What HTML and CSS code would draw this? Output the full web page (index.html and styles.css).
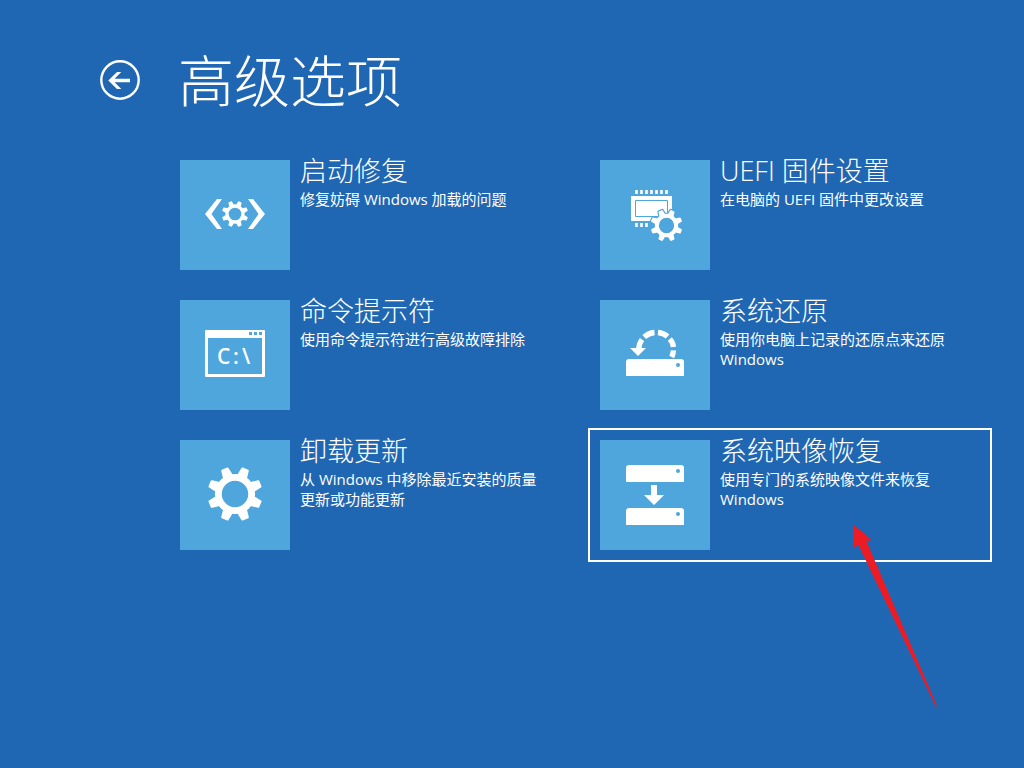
FILE: index.html
```html
<!DOCTYPE html>
<html lang="zh-CN">
<head>
    <meta charset="UTF-8">
    <meta name="viewport" content="width=device-width, initial-scale=1.0">
    <title>高级选项</title>
    <link rel="stylesheet" href="styles.css">
</head>
<body>
    <!-- shared shapes -->
    <svg class="defs" aria-hidden="true">
        <defs>
            <path id="tooth" d="M-5 -18 L-5 -21 L-4 -27 Q-4 -28 -3 -28 H3 Q4 -28 4 -27 L5 -21 V-18 Z"/>
            <g id="gear">
                <circle r="17" fill="none" stroke="#fff" stroke-width="7"/>
                <use href="#tooth" transform="rotate(22.5)"/>
                <use href="#tooth" transform="rotate(67.5)"/>
                <use href="#tooth" transform="rotate(112.5)"/>
                <use href="#tooth" transform="rotate(157.5)"/>
                <use href="#tooth" transform="rotate(202.5)"/>
                <use href="#tooth" transform="rotate(247.5)"/>
                <use href="#tooth" transform="rotate(292.5)"/>
                <use href="#tooth" transform="rotate(337.5)"/>
            </g>
            <g id="gear-edge">
                <circle r="20.5"/>
                <use href="#tooth" transform="rotate(22.5)"/>
                <use href="#tooth" transform="rotate(67.5)"/>
                <use href="#tooth" transform="rotate(112.5)"/>
                <use href="#tooth" transform="rotate(157.5)"/>
                <use href="#tooth" transform="rotate(202.5)"/>
                <use href="#tooth" transform="rotate(247.5)"/>
                <use href="#tooth" transform="rotate(292.5)"/>
                <use href="#tooth" transform="rotate(337.5)"/>
            </g>
            <g id="drive">
                <path d="M0 17 V3 Q0 0 3 0 H55 Q58 0 58 3 V17 Z"/>
                <circle class="cut" cx="52" cy="6" r="2"/>
            </g>
        </defs>
    </svg>

    <header class="header">
        <button class="back" type="button" aria-label="返回">
            <svg viewBox="0 0 40 40">
                <circle cx="20" cy="20" r="18.7" fill="none" stroke="#fff" stroke-width="2.4"/>
                <path d="M8.3 20.5 L17 12 H21.3 L14.6 18.8 H30 V22.2 H14.6 L21.3 29 H17 Z"/>
            </svg>
        </button>
        <h1>高级选项</h1>
    </header>

    <main class="options">
        <button class="option" type="button">
            <svg class="icon" viewBox="0 0 110 110">
                <path d="M25 54 L37 39 H42 L31.5 54 L42 69 H37 Z"/>
                <path d="M85 54 L73 39 H68 L78.5 54 L68 69 H73 Z"/>
                <use href="#gear" transform="translate(55 54) scale(.47)"/>
            </svg>
            <span class="text">
                <span class="name">启动修复</span>
                <span class="desc">修复妨碍 Windows 加载的问题</span>
            </span>
        </button>

        <button class="option" type="button">
            <svg class="icon" viewBox="0 0 110 110">
                <path d="M31 36 H72 V61 H31 Z"/>
                <path d="M35.5 40.5 H67.5 V56.5 H35.5 Z" fill="none" stroke="#4ea6dd"/>
                <path d="M36.5 30 V34 M41.5 30 V34 M46.5 30 V34 M51.5 30 V34 M56.5 30 V34 M61.5 30 V34 M66.5 30 V34 M36.5 63 V67 M41.5 63 V67 M46.5 63 V67" stroke="#fff" stroke-width="2.6"/>
                <use class="edge" href="#gear-edge" transform="translate(66.5 65.5) scale(.57)"/>
                <use href="#gear" transform="translate(66.5 65.5) scale(.57)"/>
            </svg>
            <span class="text">
                <span class="name">UEFI 固件设置</span>
                <span class="desc">在电脑的 UEFI 固件中更改设置</span>
            </span>
        </button>

        <button class="option" type="button">
            <svg class="icon" viewBox="0 0 110 110">
                <path fill-rule="evenodd" d="M26 30 H84 Q85 30 85 31 V76 Q85 77 84 77 H26 Q25 77 25 76 V31 Q25 30 26 30 Z M28 38 V74 H82 V38 Z"/>
                <path class="cut" d="M69 32 H72 V35 H69 Z M74 32 H77 V35 H74 Z M79 32 H82 V35 H79 Z"/>
                <text class="prompt" x="37 53 62" y="64">C:\</text>
            </svg>
            <span class="text">
                <span class="name">命令提示符</span>
                <span class="desc">使用命令提示符进行高级故障排除</span>
            </span>
        </button>

        <button class="option" type="button">
            <svg class="icon" viewBox="0 0 110 110">
                <use href="#drive" transform="translate(26 59)"/>
                <g fill="none" stroke="#fff" stroke-width="5.4">
                    <path d="M38.8 49 Q39 43.5 42 39.5"/>
                    <path d="M44.2 37 Q48.5 33 54.5 32.5"/>
                    <path d="M58 32.5 Q63.5 33 67.5 36.5"/>
                    <path d="M69.8 39 Q73 42.5 73.4 47"/>
                    <path d="M73.4 50.3 Q73.2 54 71.7 57"/>
                </g>
                <path d="M30 48 H46 L38 56 Z"/>
            </svg>
            <span class="text">
                <span class="name">系统还原</span>
                <span class="desc">使用你电脑上记录的还原点来还原 Windows</span>
            </span>
        </button>

        <button class="option" type="button">
            <svg class="icon" viewBox="0 0 110 110">
                <use href="#gear" transform="translate(55 54) scale(.98)"/>
            </svg>
            <span class="text">
                <span class="name">卸载更新</span>
                <span class="desc">从 Windows 中移除最近安装的质量更新或功能更新</span>
            </span>
        </button>

        <button class="option selected" type="button">
            <svg class="icon" viewBox="0 0 110 110">
                <use href="#drive" transform="translate(26 25)"/>
                <path d="M51 45 H57 V55 H64 L54 65 L44 55 H51 Z"/>
                <use href="#drive" transform="translate(26 68)"/>
            </svg>
            <span class="text">
                <span class="name">系统映像恢复</span>
                <span class="desc">使用专门的系统映像文件来恢复 Windows</span>
            </span>
            <svg class="pointer" viewBox="0 0 90 190" aria-hidden="true">
                <path d="M4 5 L22 20.3 L16.3 20.8 L87 186 L86 187 L8.3 24.7 L3.7 28.3 Z"/>
            </svg>
        </button>
    </main>
</body>
</html>
```
FILE: styles.css
```css
* {
    box-sizing: border-box;
}
body {
    min-height: 100vh;
    margin: 0;
    padding: 48px 32px 48px 100px;
    background-color: #1f67b3;
    color: #fff;
    font-family: "Open Sans", "Noto Sans CJK SC", sans-serif;
}
button {
    border: none;
    padding: 0;
    background: none;
    color: inherit;
    font-family: inherit;
    text-align: left;
    cursor: pointer;
}
svg {
    display: block;
    fill: #fff;
}
.defs {
    position: absolute;
    width: 0;
    height: 0;
}
.header {
    display: flex;
    align-items: center;
    gap: 38px;
    height: 64px;
}
.back,
.back svg {
    width: 40px;
    height: 40px;
}
h1 {
    margin: 0;
    font-size: 56px;
    font-weight: 300;
    line-height: 62px;
}
.options {
    display: grid;
    grid-template-columns: 1fr 1fr;
    gap: 6px 16px;
    margin-top: 36px;
    margin-left: 68px;
}
.option {
    position: relative;
    display: flex;
    align-items: flex-start;
    gap: 10px;
    padding: 10px;
    border: 2px solid transparent;
}
.option.selected {
    border-color: #fff;
}
.icon {
    flex: none;
    width: 110px;
    height: 110px;
    background-color: #4ea6dd;
}
.cut {
    fill: #4ea6dd;
}
.edge {
    fill: #4ea6dd;
    stroke: #4ea6dd;
    stroke-width: 4px;
}
.prompt {
    font-size: 21px;
    font-weight: 600;
}
.text {
    max-width: 244px;
}
.name {
    display: block;
    font-size: 27px;
    font-weight: 300;
    line-height: 22px;
    margin-bottom: 7px;
}
.desc {
    display: block;
    font-size: 15px;
    line-height: 20px;
}
.pointer {
    position: absolute;
    top: 90px;
    right: 50px;
    width: 90px;
    height: 190px;
    fill: #ed1c24;
}
```
